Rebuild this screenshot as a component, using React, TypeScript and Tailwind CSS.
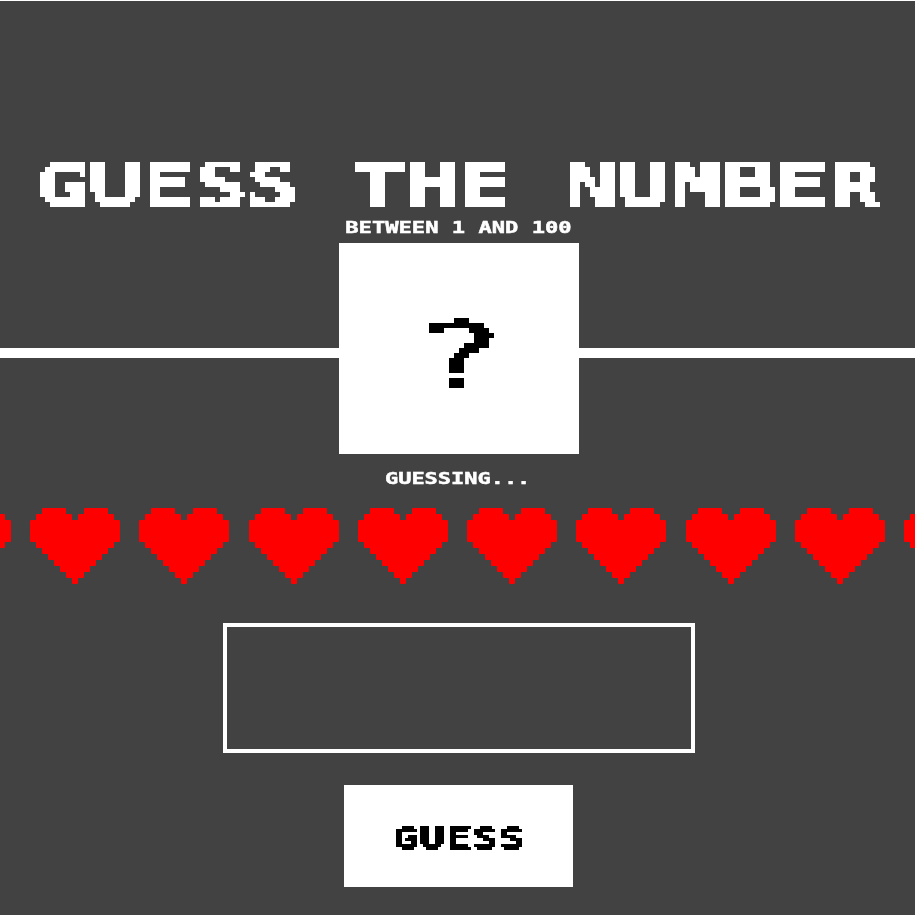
import React from "react";

// Each row of the heart: [x, y, width, height] on a 90 x 76 grid.
const heartRows = [
  [12, 0, 24, 12],
  [54, 0, 24, 12],
  [6, 6, 36, 16],
  [48, 6, 36, 16],
  [0, 12, 90, 22],
  [6, 28, 78, 12],
  [12, 34, 66, 12],
  [18, 40, 54, 12],
  [24, 46, 42, 12],
  [30, 52, 30, 12],
  [36, 58, 18, 12],
  [42, 64, 6, 12],
];

function Heart() {
  return (
    <svg width="90" height="76" viewBox="0 0 90 76" fill="#ff0000" className="shrink-0" aria-hidden="true">
      {heartRows.map(([x, y, w, h]) => (
        <rect key={`${x}-${y}`} x={x} y={y} width={w} height={h} rx="1.3" />
      ))}
    </svg>
  );
}

// Samples one point per block and grows it to fill the block, for an 8-bit look.
function PixelFilter({ id, radius }: { id: string; radius: number }) {
  const size = radius * 2 + 1;
  return (
    <filter id={id} x="0" y="0" width="100%" height="100%" colorInterpolationFilters="sRGB">
      <feFlood x={radius} y={radius} width="1" height="1" floodColor="#000" result="dot" />
      <feOffset in="dot" x="0" y="0" width={size} height={size} dx="0" dy="0" />
      <feTile result="grid" />
      <feComposite in="SourceGraphic" in2="grid" operator="in" />
      <feComponentTransfer>
        <feFuncA type="discrete" tableValues="0 1" />
      </feComponentTransfer>
      <feMorphology operator="dilate" radius={radius} />
    </filter>
  );
}

export default function App() {
  return (
    <main className="flex h-[915px] w-[915px] flex-col items-center overflow-hidden border-t border-white bg-[#424242] font-['DejaVu_Sans_Mono','Liberation_Mono',monospace] font-bold text-white">
      <svg width="0" height="0" className="absolute" aria-hidden="true">
        <PixelFilter id="pixel-small" radius={1} />
        <PixelFilter id="pixel-medium" radius={2} />
      </svg>
      <div className="mt-[156px] flex h-[60px] w-full shrink-0 justify-center pl-[2px] [filter:url(#pixel-medium)]">
        <h1 className="h-[58px] scale-x-[1.416] text-[62px] leading-[58px] whitespace-pre [-webkit-text-stroke:1.4px_white]">
          GUESS THE NUMBER
        </h1>
      </div>
      <p className="mt-[2px] ml-[2px] h-[18px] scale-x-[1.34] text-[16.5px] leading-[18px] whitespace-pre [-webkit-text-stroke:0.5px_white]">
        BETWEEN 1 AND 100
      </p>
      <section className="mt-[5.5px] flex h-[211px] w-full shrink-0 items-center">
        <div className="mt-[10px] h-[10px] w-[339px] bg-white" />
        <div className="flex h-full w-[240px] items-center justify-center bg-white text-black">
          <div className="flex h-[120px] w-[120px] items-center justify-center [filter:url(#pixel-medium)]">
            <span className="mt-[17px] scale-x-[1.75] text-[90px] leading-none font-normal [-webkit-text-stroke:1px_black]">?</span>
          </div>
        </div>
        <div className="mt-[10px] h-[10px] flex-1 bg-white" />
      </section>
      <p className="mt-[16px] ml-[1px] h-[18px] scale-x-[1.33] text-[16.5px] leading-[18px] whitespace-pre [-webkit-text-stroke:0.5px_white]">
        GUESSING...
      </p>
      <div className="mt-[20.5px] flex h-[76px] shrink-0 justify-center gap-[19.3px]">
        {Array.from({ length: 10 }, (_, i) => (
          <Heart key={i} />
        ))}
      </div>
      <input
        type="text"
        aria-label="Your guess"
        className="mt-[39px] ml-[3px] h-[130px] w-[472px] shrink-0 border-4 border-white bg-transparent text-center text-5xl outline-none"
      />
      <button className="mt-8 ml-[2px] flex h-[102px] w-[229px] shrink-0 items-center justify-center bg-white text-black">
        <span className="flex h-[45px] w-[180px] items-center justify-center [filter:url(#pixel-small)]">
          <span className="mt-[5px] scale-x-[1.42] text-[31px] leading-none [-webkit-text-stroke:0.5px_black]">GUESS</span>
        </span>
      </button>
    </main>
  );
}
